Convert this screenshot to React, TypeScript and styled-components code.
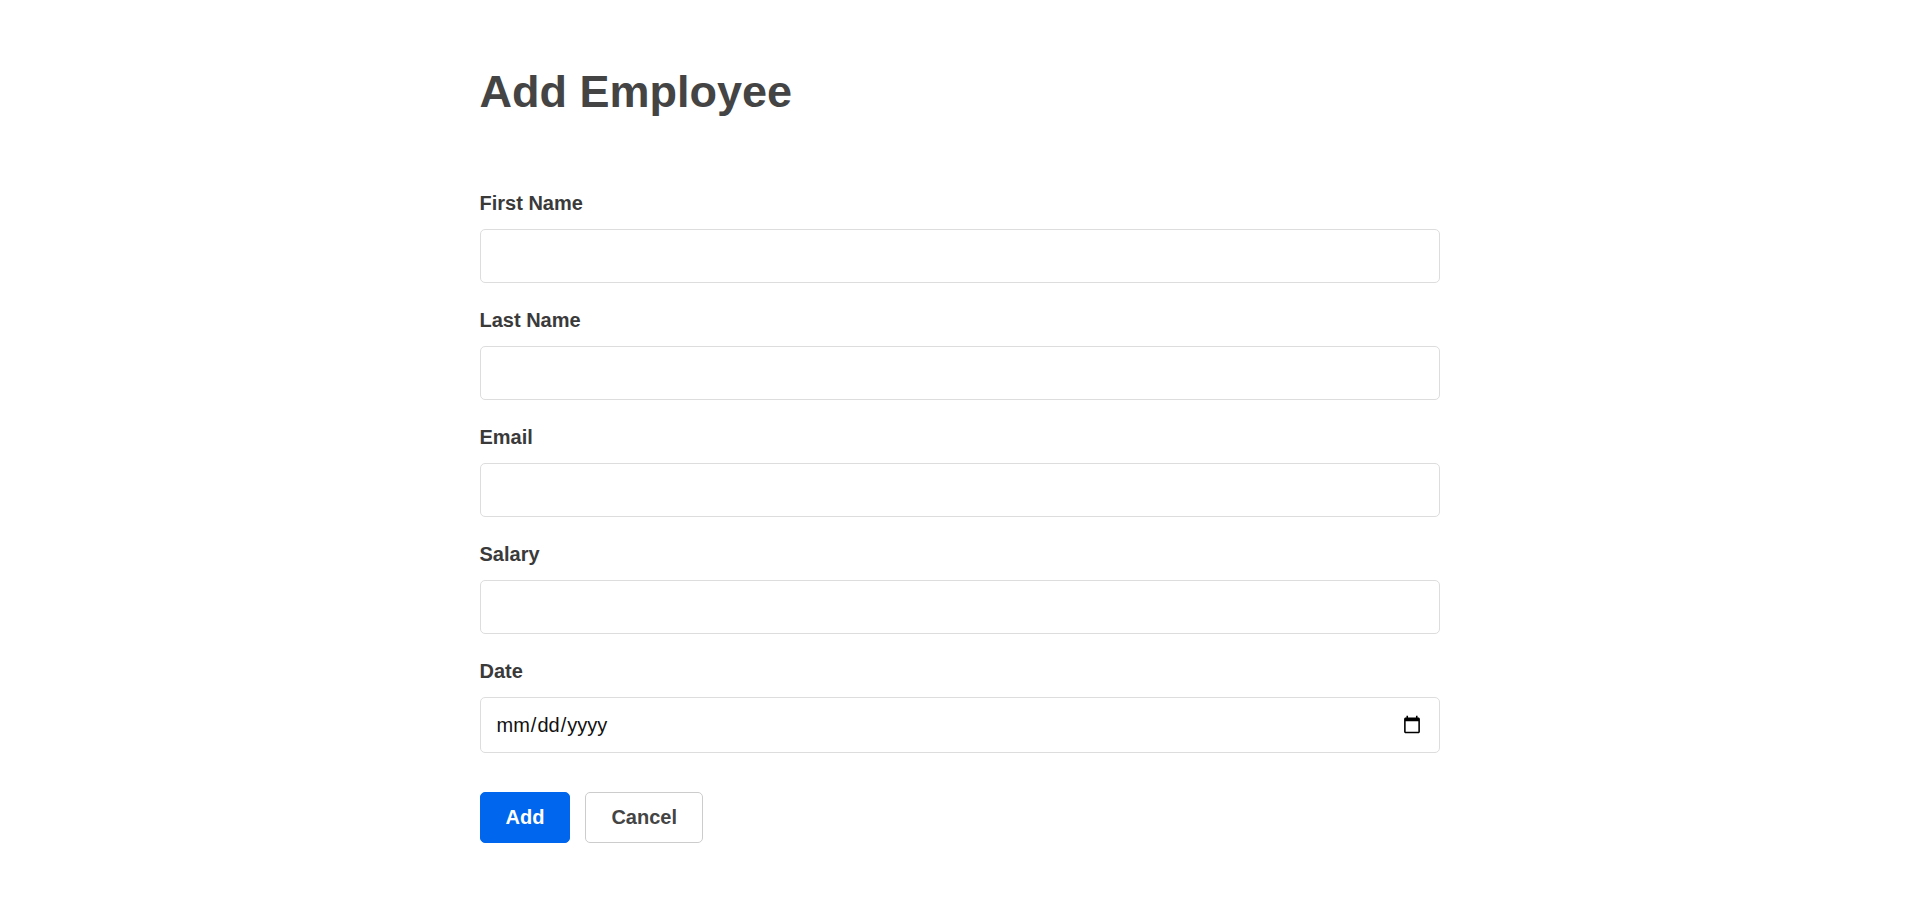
import React from "react";
import styled, { createGlobalStyle } from "styled-components";

const GlobalStyle = createGlobalStyle`
  html, body { margin: 0; padding: 0; background: #ffffff; }
  body { font-family: "Liberation Sans", Arial, sans-serif; color: #444444; }
  * { box-sizing: border-box; }
`;

const Page = styled.main`
  max-width: 960px;
  margin: 0 auto;
  padding-top: 66px;
  position: relative;
  left: 0.5px;
`;

const Title = styled.h1`
  margin: 0 0 74px 0;
  font-size: 45px;
  line-height: 52px;
  font-weight: 700;
  color: #444444;
`;

const Form = styled.form`
  display: flex;
  flex-direction: column;
`;

const Group = styled.div`
  display: flex;
  flex-direction: column;
  margin-bottom: 26px;
`;

const Label = styled.label`
  font-size: 20px;
  line-height: 23px;
  font-weight: 700;
  color: #3a3a3a;
  margin-bottom: 14px;
`;

const Input = styled.input<{ $tall?: boolean }>`
  width: 100%;
  height: ${(p) => (p.$tall ? "56px" : "54px")};
  padding: 0 15px;
  border: 1px solid #dddddd;
  border-radius: 5px;
  font-family: "Liberation Sans", Arial, sans-serif;
  font-size: 20px;
  color: #111111;
  background: #ffffff;
  outline: none;
`;

const Actions = styled.div`
  display: flex;
  gap: 15px;
  margin-top: 13px;
`;

const Button = styled.button<{ $primary?: boolean }>`
  height: 51px;
  padding: 0 25px;
  border-radius: 5px;
  border: 1px solid ${(p) => (p.$primary ? "#0066ee" : "#cccccc")};
  background: ${(p) => (p.$primary ? "#0066ee" : "#ffffff")};
  color: ${(p) => (p.$primary ? "#ffffff" : "#444444")};
  font-family: "Liberation Sans", Arial, sans-serif;
  font-size: 20px;
  font-weight: 700;
  cursor: pointer;
`;

const fields = [
  { id: "firstName", label: "First Name", type: "text" },
  { id: "lastName", label: "Last Name", type: "text" },
  { id: "email", label: "Email", type: "email" },
  { id: "salary", label: "Salary", type: "text" },
  { id: "date", label: "Date", type: "date" },
];

export default function App() {
  return (
    <>
      <GlobalStyle />
      <Page>
        <Title>Add Employee</Title>
        <Form onSubmit={(e) => e.preventDefault()}>
          {fields.map((f) => (
            <Group key={f.id}>
              <Label htmlFor={f.id}>{f.label}</Label>
              <Input id={f.id} type={f.type} $tall={f.type === "date"} />
            </Group>
          ))}
          <Actions>
            <Button type="submit" $primary>
              Add
            </Button>
            <Button type="button">Cancel</Button>
          </Actions>
        </Form>
      </Page>
    </>
  );
}
